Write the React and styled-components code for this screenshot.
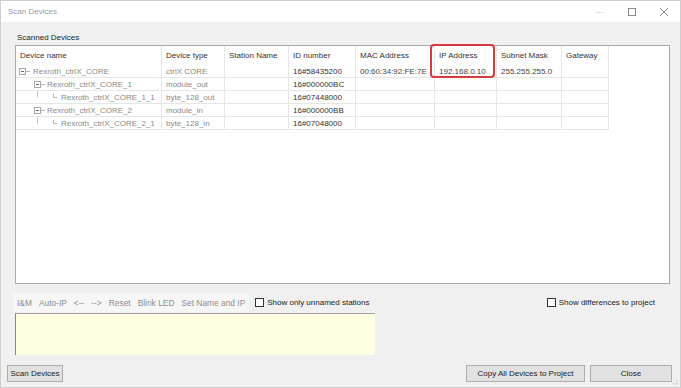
import React from "react";
import styled, { createGlobalStyle } from "styled-components";

const Global = createGlobalStyle`
  html, body { margin: 0; padding: 0; background: #f0f0f0; }
  body { font-family: "Liberation Sans", Arial, sans-serif; font-size: 8px; color: #222; }
  * { box-sizing: border-box; }
`;

const Window = styled.div`
  position: relative;
  width: 681px;
  height: 388px;
  background: #f0f0f0;
  border: 1px solid #cfcfcf;
  display: flex;
  flex-direction: column;
  overflow: hidden;
`;

const TitleBar = styled.div`
  height: 21px;
  flex: none;
  background: #ffffff;
  display: flex;
  align-items: center;
  padding-left: 7px;
`;

const Title = styled.span`
  flex: 1;
  color: #9b9b9b;
  font-size: 8px;
`;

const WinButton = styled.div`
  width: 32px;
  height: 21px;
  display: flex;
  align-items: center;
  justify-content: center;
`;

const Body = styled.div`
  flex: 1;
  display: flex;
  flex-direction: column;
  padding: 0 0 0 14px;
`;

const GroupLabel = styled.div`
  margin: 10px 0 0 2px;
  height: 12px;
  line-height: 12px;
  color: #222;
`;

const ListBox = styled.div`
  position: relative;
  margin-top: 1px;
  width: 655px;
  height: 239px;
  background: #ffffff;
  border: 1px solid #a9a9a9;
`;

const Grid = styled.div`
  display: grid;
  grid-template-columns: 146px 63px 64px 67px 79px 62px 65px 47px;
  width: max-content;
`;

const HeadCell = styled.div`
  height: 19px;
  line-height: 19px;
  padding-left: 4px;
  color: #333;
  border-right: 1px solid #e6e6e6;
  white-space: nowrap;
  overflow: hidden;
`;

const Cell = styled.div`
  height: 13px;
  line-height: 13px;
  padding-left: ${(p) => (p.$pad != null ? p.$pad : 4)}px;
  color: ${(p) => p.$color || "#333"};
  border-right: 1px solid #e6e6e6;
  border-bottom: 1px solid #e6e6e6;
  white-space: nowrap;
  overflow: hidden;
  display: flex;
  align-items: center;
`;

const Highlight = styled.div`
  position: absolute;
  left: 414px;
  top: -2px;
  width: 65px;
  height: 34px;
  border: 2px solid #d8383f;
  border-radius: 4px;
  pointer-events: none;
`;

const ToolRow = styled.div`
  margin-top: 9px;
  height: 19px;
  display: flex;
  align-items: center;
  margin-left: -2px;
  padding-right: 25px;
`;

const ToolStrip = styled.div`
  height: 19px;
  display: flex;
  align-items: center;
  gap: 7px;
  padding: 0 4px 0 4px;
  background: #f6f6f6;
`;

const ToolItem = styled.span`
  color: #8e8e8e;
  font-size: 8.4px;
  white-space: nowrap;
`;

const CheckLabel = styled.label`
  display: flex;
  align-items: center;
  gap: 3px;
  margin-left: ${(p) => (p.$push ? "auto" : "6px")};
  color: #222;
  white-space: nowrap;
`;

const Box = styled.span`
  width: 9px;
  height: 9px;
  border: 1px solid #333;
  background: #fff;
`;

const Yellow = styled.div`
  margin-top: 1px;
  width: 360px;
  height: 42px;
  background: #ffffe1;
  border-top: 1px solid #a0a0a0;
  border-left: 1px solid #8a8a8a;
`;

const ButtonRow = styled.div`
  margin-top: 10px;
  margin-left: -8px;
  display: flex;
  align-items: center;
  padding-right: 8px;
`;

const Button = styled.div`
  width: ${(p) => p.$w}px;
  height: 17px;
  line-height: 15px;
  text-align: center;
  background: #e1e1e1;
  border: 1px solid #adadad;
  color: #222;
  margin-left: ${(p) => p.$ml || 0};
  white-space: nowrap;
`;

const Grip = styled.svg`
  position: absolute;
  right: 1px;
  bottom: 1px;
`;

const Expander = ({ w }) => (
  <svg width={w} height="9" style={{ flex: "none" }}>
    <rect x="0.5" y="1.5" width="6" height="6" fill="#fff" stroke="#a8a8a8" />
    <line x1="2" y1="4.5" x2="5" y2="4.5" stroke="#666" />
    <line x1="7" y1="4.5" x2="11" y2="4.5" stroke="#b5b5b5" />
  </svg>
);

const Leaf = () => (
  <svg width="27" height="13" style={{ flex: "none" }}>
    <line x1="3.5" y1="0" x2="3.5" y2="6.5" stroke="#c9c9c9" />
    <line x1="19.5" y1="3" x2="19.5" y2="6.5" stroke="#b5b5b5" />
    <line x1="19.5" y1="6.5" x2="23" y2="6.5" stroke="#b5b5b5" />
  </svg>
);

const headers = [
  "Device name",
  "Device type",
  "Station Name",
  "ID number",
  "MAC Address",
  "IP Address",
  "Subnet Mask",
  "Gateway",
];

const rows = [
  { name: "Rexroth_ctrlX_CORE", kind: "root", type: "ctrlX CORE", id: "16#58435200", mac: "00:60:34:92:FE:7E", ip: "192.168.0.10", mask: "255.255.255.0" },
  { name: "Rexroth_ctrlX_CORE_1", kind: "mid", type: "module_out", id: "16#000000BC" },
  { name: "Rexroth_ctrlX_CORE_1_1", kind: "leaf", type: "byte_128_out", id: "16#07448000" },
  { name: "Rexroth_ctrlX_CORE_2", kind: "mid", type: "module_in", id: "16#000000BB" },
  { name: "Rexroth_ctrlX_CORE_2_1", kind: "leaf", type: "byte_128_in", id: "16#07048000" },
];

const gray = "#8a8a8a";

export default function App() {
  return (
    <>
      <Global />
      <Window>
        <TitleBar>
          <Title>Scan Devices</Title>
          <WinButton>
            <svg width="10" height="10"><line x1="0" y1="5.5" x2="9" y2="5.5" stroke="#e4e4e4" /></svg>
          </WinButton>
          <WinButton>
            <svg width="10" height="10"><rect x="1.5" y="1.5" width="7" height="7" fill="none" stroke="#8a8a8a" /></svg>
          </WinButton>
          <WinButton>
            <svg width="10" height="10"><path d="M1 1L9 9M9 1L1 9" stroke="#8a8a8a" strokeWidth="1" /></svg>
          </WinButton>
        </TitleBar>
        <Body>
          <GroupLabel>Scanned Devices</GroupLabel>
          <ListBox>
            <Grid>
              {headers.map((h) => (
                <HeadCell key={h}>{h}</HeadCell>
              ))}
              {rows.map((r) => (
                <React.Fragment key={r.name}>
                  <Cell $color={gray} $pad={r.kind === "root" ? 3 : 18}>
                    {r.kind === "leaf" ? <Leaf /> : <Expander w={r.kind === "root" ? 14 : 13} />}
                    {r.name}
                  </Cell>
                  <Cell $color={gray}>{r.type}</Cell>
                  <Cell />
                  <Cell $color="#333">{r.id}</Cell>
                  <Cell $color="#444">{r.mac || ""}</Cell>
                  <Cell $color="#444">{r.ip || ""}</Cell>
                  <Cell $color="#444">{r.mask || ""}</Cell>
                  <Cell />
                </React.Fragment>
              ))}
            </Grid>
            <Highlight />
          </ListBox>
          <ToolRow>
            <ToolStrip>
              <ToolItem>I&amp;M</ToolItem>
              <ToolItem>Auto-IP</ToolItem>
              <ToolItem>&lt;--</ToolItem>
              <ToolItem>--&gt;</ToolItem>
              <ToolItem>Reset</ToolItem>
              <ToolItem>Blink LED</ToolItem>
              <ToolItem>Set Name and IP</ToolItem>
            </ToolStrip>
            <CheckLabel>
              <Box />
              Show only unnamed stations
            </CheckLabel>
            <CheckLabel $push>
              <Box />
              Show differences to project
            </CheckLabel>
          </ToolRow>
          <Yellow />
          <ButtonRow>
            <Button $w={56}>Scan Devices</Button>
            <Button $w={119} $ml="auto">Copy All Devices to Project</Button>
            <Button $w={82} $ml="5px">Close</Button>
          </ButtonRow>
        </Body>
        <Grip width="8" height="8">
          <rect x="5" y="5" width="1.5" height="1.5" fill="#c4c4c4" />
          <rect x="2" y="5" width="1.5" height="1.5" fill="#c4c4c4" />
          <rect x="5" y="2" width="1.5" height="1.5" fill="#c4c4c4" />
        </Grip>
      </Window>
    </>
  );
}
